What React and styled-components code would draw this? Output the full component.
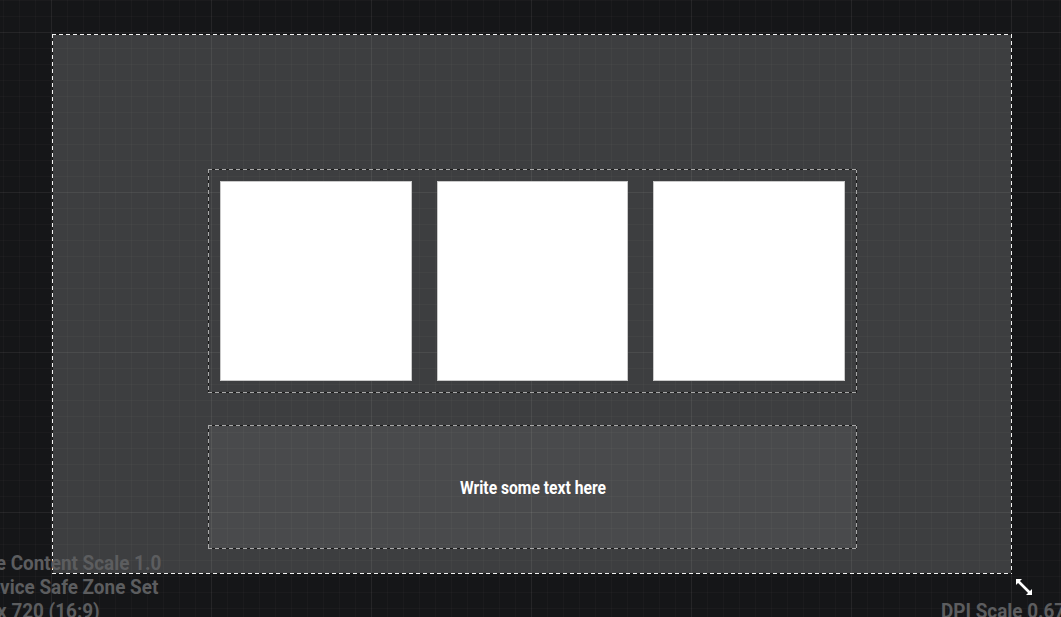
import React from "react";
import styled, { createGlobalStyle } from "styled-components";

const GlobalStyle = createGlobalStyle`
  html, body {
    margin: 0;
    padding: 0;
    background: #151618;
    overflow: hidden;
  }
  * {
    box-sizing: border-box;
  }
`;

const grid = `
  linear-gradient(90deg, rgba(255, 255, 255, 0.045) 0 1px, transparent 1px),
  linear-gradient(0deg, rgba(255, 255, 255, 0.045) 0 1px, transparent 1px),
  linear-gradient(90deg, rgba(255, 255, 255, 0.025) 0 1px, transparent 1px),
  linear-gradient(0deg, rgba(255, 255, 255, 0.025) 0 1px, transparent 1px)
`;

const Designer = styled.div`
  position: relative;
  width: 100vw;
  height: 100vh;
  overflow: hidden;
  padding: 34px 0 0 52px;
  background-color: #151618;
  background-image: ${grid};
  background-size: 160px 160px, 160px 160px, 16px 16px, 16px 16px;
  background-position: 51px 0, 0 33px, 3px 0, 0 1px;
  background-attachment: fixed;
  font-family: Roboto, "Liberation Sans", sans-serif;
`;

const dashed = (dash, gap) => `
  repeating-linear-gradient(90deg, ${dash} 0 4px, ${gap} 4px 7px),
  repeating-linear-gradient(90deg, ${dash} 0 4px, ${gap} 4px 7px),
  repeating-linear-gradient(180deg, ${dash} 0 4px, ${gap} 4px 7px),
  repeating-linear-gradient(180deg, ${dash} 0 4px, ${gap} 4px 7px)
`;

const DashedFrame = styled.div`
  position: relative;
  &::before {
    content: "";
    position: absolute;
    inset: 0;
    pointer-events: none;
    background-image: ${(p) => dashed(p.$dash, p.$gap)};
    background-size: 100% 1px, 100% 1px, 1px 100%, 1px 100%;
    background-position: top left, bottom left, top left, top right;
    background-repeat: no-repeat;
  }
`;

const Canvas = styled(DashedFrame)`
  width: 960px;
  height: 540px;
  padding: 135px 0 0 1px;
  display: flex;
  flex-direction: column;
  align-items: center;
  gap: 32px;
  background-color: #3d3e40;
  background-image: ${grid};
  background-size: 160px 160px, 160px 160px, 16px 16px, 16px 16px;
  background-position: 51px 0, 0 33px, 3px 0, 0 1px;
  background-attachment: fixed;
`;

const Row = styled(DashedFrame)`
  width: 649px;
  height: 224px;
  padding: 12px;
  display: flex;
  gap: 25px;
`;

const Tile = styled.div`
  flex: 1;
  background: #ffffff;
  border: 1px solid #c9c9c9;
`;

const TextBox = styled(DashedFrame)`
  width: 649px;
  height: 124px;
  display: flex;
  align-items: center;
  justify-content: center;
  background: rgba(255, 255, 255, 0.065);
`;

const Label = styled.span`
  display: inline-block;
  color: #ffffff;
  font-weight: 700;
  font-size: 18px;
  transform: scaleX(0.87);
  padding-top: 1px;
`;

const Info = styled.div`
  position: absolute;
  left: ${(p) => p.$left}px;
  top: ${(p) => p.$top}px;
  color: #5c5d5f;
  font-weight: 700;
  font-size: 21px;
  line-height: 24px;
  white-space: nowrap;
  transform: scaleX(0.9);
  transform-origin: left top;
`;

const ResizeHandle = styled.svg`
  position: absolute;
  left: 1014px;
  top: 577px;
`;

export default function App() {
  return (
    <>
      <GlobalStyle />
      <Designer>
        <Canvas $dash="#f2f2f2" $gap="#1a1a1a">
          <Row $dash="#a8a8a8" $gap="#1a1a1a">
            <Tile />
            <Tile />
            <Tile />
          </Row>
          <TextBox $dash="#a8a8a8" $gap="#1a1a1a">
            <Label>Write some text here</Label>
          </TextBox>
        </Canvas>
        <Info $left={-51} $top={551}>
          <div>Device Content Scale 1.0</div>
          <div>No Device Safe Zone Set</div>
          <div>1280 x 720 (16:9)</div>
        </Info>
        <Info $left={941} $top={599}>
          DPI Scale 0.67
        </Info>
        <ResizeHandle width="20" height="20" viewBox="0 0 20 20">
          <path d="M4 4 L16 16" stroke="#fff" strokeWidth="2.6" />
          <path d="M2 2 H8 L2 8 Z" fill="#fff" />
          <path d="M18 18 H12 L18 12 Z" fill="#fff" />
        </ResizeHandle>
      </Designer>
    </>
  );
}
